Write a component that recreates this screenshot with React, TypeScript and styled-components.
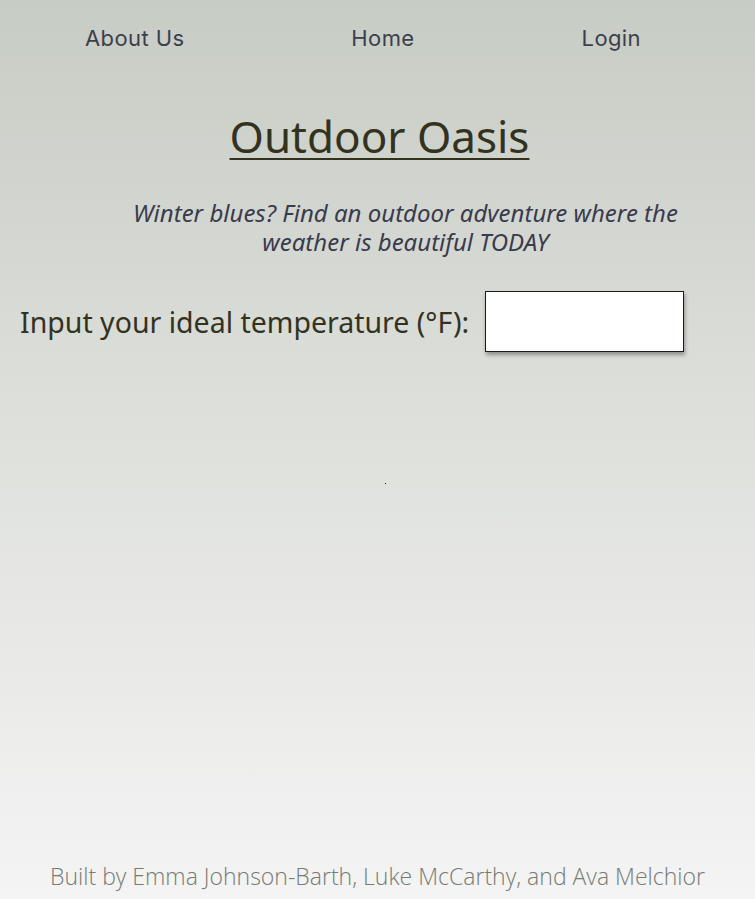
import React from "react";
import styled, { createGlobalStyle } from "styled-components";

const Global = createGlobalStyle`
  html, body { margin: 0; padding: 0; }
  body {
    background: linear-gradient(to bottom, #c7ccc4 0%, #dfe1dd 50%, #f4f4f4 100%);
    min-height: 899px;
  }
  * { box-sizing: border-box; }
`;

const Page = styled.div`
  min-height: 899px;
  display: flex;
  flex-direction: column;
`;

const Nav = styled.nav`
  display: flex;
  justify-content: space-between;
  align-items: center;
  padding: 19px 114px 0 85px;
  height: 57px;
`;

const NavLink = styled.a`
  font-family: "Inter", "Liberation Sans", sans-serif;
  font-size: 22px;
  color: #3d3f4d;
  text-decoration: none;
  letter-spacing: 0.4px;
`;

const Title = styled.h1`
  margin: 49px 0 0;
  text-align: center;
  font-family: "Noto Sans", "Open Sans", sans-serif;
  font-weight: 400;
  font-size: 44px;
  line-height: 60px;
  color: #33321f;
  text-decoration: underline;
  text-decoration-thickness: 2px;
  text-underline-offset: 5px;
  padding-left: 4px;
`;

const Tagline = styled.p`
  margin: 32px auto 0;
  width: 620px;
  padding-left: 56px;
  text-align: center;
  font-family: "Noto Sans", "Open Sans", sans-serif;
  font-style: italic;
  font-size: 24px;
  line-height: 29px;
  color: #3a3b4c;
`;

const Row = styled.div`
  display: flex;
  align-items: center;
  gap: 16px;
  margin-top: 35px;
  padding-left: 20px;
`;

const Label = styled.label`
  font-family: "Noto Sans", "Open Sans", sans-serif;
  font-size: 28.5px;
  color: #33321f;
`;

const TempInput = styled.input`
  width: 199px;
  height: 61px;
  background: #fff;
  border: 1.5px solid #1a1a1a;
  box-shadow: 1px 3px 4px rgba(0, 0, 0, 0.35);
  font-size: 20px;
  padding: 0 8px;
`;

const Results = styled.div`
  display: flex;
  justify-content: center;
  margin-top: 131px;
  padding-left: 16px;
`;

const Dot = styled.div`
  width: 1px;
  height: 1px;
  background: #222;
`;

const Footer = styled.footer`
  margin-top: auto;
  padding-bottom: 7px;
  text-align: center;
  font-family: "Open Sans", "Noto Sans", sans-serif;
  font-weight: 300;
  font-size: 23px;
  line-height: 32px;
  color: #767b74;
`;

export default function App() {
  return (
    <>
      <Global />
      <Page>
        <Nav>
          <NavLink href="#">About Us</NavLink>
          <NavLink href="#">Home</NavLink>
          <NavLink href="#">Login</NavLink>
        </Nav>
        <Title>Outdoor Oasis</Title>
        <Tagline>
          Winter blues? Find an outdoor adventure where the weather is beautiful TODAY
        </Tagline>
        <Row>
          <Label htmlFor="temp">Input your ideal temperature (°F):</Label>
          <TempInput id="temp" type="text" />
        </Row>
        <Results>
          <Dot />
        </Results>
        <Footer>Built by Emma Johnson-Barth, Luke McCarthy, and Ava Melchior</Footer>
      </Page>
    </>
  );
}
